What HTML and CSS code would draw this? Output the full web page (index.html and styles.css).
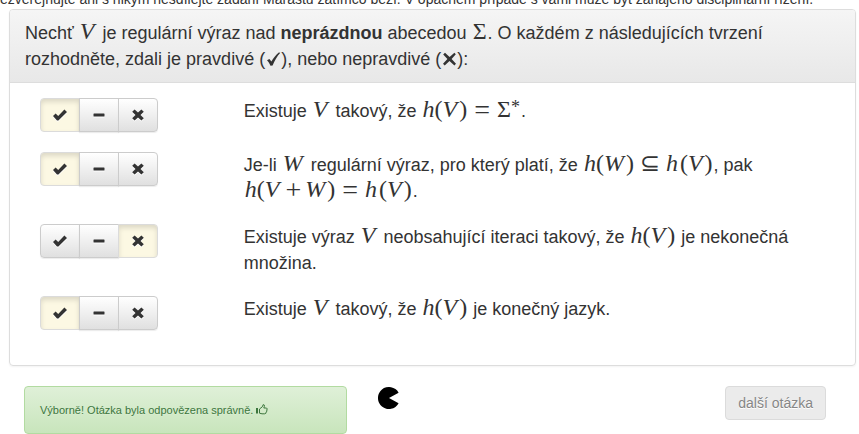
FILE: index.html
```html
<!DOCTYPE html>
<html lang="cs">
<head>
<meta charset="utf-8">
<meta name="viewport" content="width=device-width, initial-scale=1">
<title>Marast</title>
<link rel="stylesheet" href="styles.css">
</head>
<body>
<svg class="sprite" aria-hidden="true">
  <symbol id="ok" viewBox="0 0 14 12"><path d="M0 7 2.6 4.6 5.2 7 11.4 0.6 14 3 5.4 11.6H4z"/></symbol>
  <symbol id="minus" viewBox="0 0 14 12"><path d="M2 4.5h10a.5.5 0 0 1 .5.5v2a.5.5 0 0 1-.5.5H2a.5.5 0 0 1-.5-.5V5a.5.5 0 0 1 .5-.5z"/></symbol>
  <symbol id="remove" viewBox="0 0 14 12"><path d="M3.6.4 7 3.6 10.4.4 12.8 2.8 9.5 6l3.3 3.2-2.4 2.4L7 8.4l-3.4 3.2-2.4-2.4L4.5 6 1.2 2.8z"/></symbol>
</svg>
<p class="notice">ezveřejňujte ani s nikým nesdílejte zadání Marastu zatímco běží. V opačném případě s vámi může být zahájeno disciplinární řízení.</p>
<main>
  <section class="panel">
    <header class="panel-heading">Nechť <span class="math"><i>V</i></span> je regulární výraz nad <b>neprázdnou</b> abecedou <span class="math">Σ</span>. O každém z následujících tvrzení rozhodněte, zdali je pravdivé (<svg class="mark" viewBox="0 0 15 14" role="img" aria-label="ano"><path d="M1 8.2 3.4 7l2 2.6C7.400 6 9.700 2.800 12.800.4L14.300.8C11 4.400 8.600 8.800 6.600 13.400L4.500 13.800C3.600 11.600 2.500 9.800 1 8.200z"/></svg>), nebo nepravdivé (<svg class="mark" viewBox="0 0 15 14" role="img" aria-label="ne"><path d="M3 .8 7.600 5 12.400.8 13.800 2.200 9.600 7l4.400 4.800-1.600 1.600L7.500 9l-4.800 4.400L1 11.800 5.400 7 1.200 2.400z"/></svg>):</header>
    <div class="panel-body">
      <div class="question">
        <div class="choices" role="group" aria-label="Tvrzení 1">
          <button type="button" aria-label="Pravda" aria-pressed="true"><svg><use href="#ok"/></svg></button>
          <button type="button" aria-label="Nevím" aria-pressed="false"><svg><use href="#minus"/></svg></button>
          <button type="button" aria-label="Nepravda" aria-pressed="false"><svg><use href="#remove"/></svg></button>
        </div>
        <p>Existuje <span class="math"><i>V</i></span> takový, že <span class="math"><i>h</i>(<i>V</i>)<span class="rel">=</span>Σ<sup>*</sup></span>.</p>
      </div>
      <div class="question">
        <div class="choices" role="group" aria-label="Tvrzení 2">
          <button type="button" aria-label="Pravda" aria-pressed="true"><svg><use href="#ok"/></svg></button>
          <button type="button" aria-label="Nevím" aria-pressed="false"><svg><use href="#minus"/></svg></button>
          <button type="button" aria-label="Nepravda" aria-pressed="false"><svg><use href="#remove"/></svg></button>
        </div>
        <p>Je-li <span class="math"><i>W</i></span> regulární výraz, pro který platí, že <span class="math"><i>h</i>(<i>W</i>)<span class="subset">⊆</span><i>h</i>(<i>V</i>)</span>, pak <span class="math"><i>h</i>(<i>V</i><span class="op">+</span><i>W</i>)<span class="rel">=</span><i>h</i>(<i>V</i>)</span>.</p>
      </div>
      <div class="question">
        <div class="choices" role="group" aria-label="Tvrzení 3">
          <button type="button" aria-label="Pravda" aria-pressed="false"><svg><use href="#ok"/></svg></button>
          <button type="button" aria-label="Nevím" aria-pressed="false"><svg><use href="#minus"/></svg></button>
          <button type="button" aria-label="Nepravda" aria-pressed="true"><svg><use href="#remove"/></svg></button>
        </div>
        <p>Existuje výraz <span class="math"><i>V</i></span> neobsahující iteraci takový, že <span class="math"><i>h</i>(<i>V</i>)</span> je nekonečná množina.</p>
      </div>
      <div class="question">
        <div class="choices" role="group" aria-label="Tvrzení 4">
          <button type="button" aria-label="Pravda" aria-pressed="true"><svg><use href="#ok"/></svg></button>
          <button type="button" aria-label="Nevím" aria-pressed="false"><svg><use href="#minus"/></svg></button>
          <button type="button" aria-label="Nepravda" aria-pressed="false"><svg><use href="#remove"/></svg></button>
        </div>
        <p>Existuje <span class="math"><i>V</i></span> takový, že <span class="math"><i>h</i>(<i>V</i>)</span> je konečný jazyk.</p>
      </div>
    </div>
  </section>
  <footer class="actions">
    <div class="cell">
      <div class="alert" role="status">Výborně! Otázka byla odpovězena správně. <svg class="thumb" viewBox="0 0 12 11" aria-hidden="true"><path class="cuff" d="M0 4h2v5.500H0z"/><path d="M3.500 9.200V5L6.300 2.800 7.200.6Q8.800.4 8.300 2.600L7.800 4h2.700q1.300.8.300 2 .5 1.300-.6 2 0 1.800-1.500 1.800H6z"/></svg></div>
    </div>
    <div class="cell"><svg class="pacman" viewBox="0 0 22 22" role="img" aria-label="Načítání"><path d="M11 11 20.600 5.700A11 11 0 1 0 20.600 16.300z"/></svg></div>
    <div class="cell next"><button class="btn" type="button" disabled>další otázka</button></div>
  </footer>
</main>
</body>
</html>
```
FILE: styles.css
```css
* { box-sizing: border-box; }

body {
  margin: 0;
  background: #fff;
  color: #333;
  font: 14px/20px "Liberation Sans", Arial, sans-serif;
  overflow: hidden;
}

.sprite { display: none; }

p { margin: 0; }

.notice {
  display: flex;
  align-items: flex-end;
  height: 9px;
  overflow: hidden;
  white-space: nowrap;
}

main { margin: 0 3px 0 9px; }

.panel {
  border: 1px solid #ddd;
  border-radius: 4px;
  box-shadow: 0 1px 2px rgba(0, 0, 0, .05);
  font-size: 18px;
  line-height: 26px;
}

.panel-heading {
  padding: 10px 15px;
  border-bottom: 1px solid #ddd;
  border-radius: 3px 3px 0 0;
  background: linear-gradient(#f5f5f5, #e8e8e8);
}

.mark {
  width: 15px;
  height: 14px;
  margin-left: 1px;
  vertical-align: -1px;
  fill: #333;
}

.panel-body { padding: 15px; }

.question {
  display: grid;
  grid-template-columns: minmax(0, 1fr) minmax(0, 3fr);
  margin-bottom: 20px;
}

.question > * { margin: 0 15px; }

.math {
  margin: 0 1px;
  font-family: "Liberation Serif", "Times New Roman", serif;
  font-size: 24px;
  line-height: 20px;
  white-space: nowrap;
}

.math i { margin-right: 2px; }
.math i:first-child:not(:last-child) { margin-right: 0; }

.math .subset { margin: 0 6px; }

.math .rel,
.math .op {
  font-size: 28px;
  line-height: 0;
  vertical-align: -2px;
}

.math .rel { margin: 0 7px; }
.math .op { margin: 0 4px; }

.math sup {
  font-size: 18px;
  line-height: 0;
  vertical-align: 4px;
}

.choices {
  display: flex;
  align-self: start;
}

.choices button {
  display: flex;
  align-items: center;
  justify-content: center;
  width: 40px;
  height: 34px;
  padding: 0;
  border: 1px solid #ccc;
  background: linear-gradient(#fff, #e0e0e0);
  box-shadow: inset 0 1px 0 rgba(255, 255, 255, .15), 0 1px 1px rgba(0, 0, 0, .075);
}

.choices button + button { margin-left: -1px; }
.choices button:first-child { border-radius: 4px 0 0 4px; }
.choices button:last-child { border-radius: 0 4px 4px 0; }

.choices button[aria-pressed="true"] {
  border-color: #dbdbdb;
  background: #fcf8e3;
  box-shadow: inset 0 3px 5px rgba(0, 0, 0, .125);
}

.choices svg {
  width: 14px;
  height: 12px;
  fill: #333;
  filter: drop-shadow(0 1px 0 #fff);
}

.actions {
  display: grid;
  grid-template-columns: 5fr 1fr 6fr;
  padding-top: 20px;
}

.cell { padding: 0 15px; }

.next {
  padding-right: 30px;
  text-align: right;
}

.alert {
  padding: 13px 15px;
  border: 1px solid #b2dba1;
  border-radius: 4px;
  background: linear-gradient(#dff0d8, #c8e5bc);
  color: #3c763d;
  font-size: 11px;
  text-shadow: 0 1px 0 rgba(255, 255, 255, .2);
}

.thumb {
  width: 12px;
  height: 11px;
  vertical-align: -1px;
  fill: none;
  stroke: currentColor;
}

.thumb .cuff {
  fill: currentColor;
  stroke: none;
}

.pacman {
  display: block;
  width: 22px;
  height: 22px;
  margin: 1px;
}

.btn {
  padding: 6px 12px;
  border: 1px solid #dbdbdb;
  border-radius: 4px;
  background: #ebebeb;
  color: #868686;
  font: inherit;
  text-shadow: 0 1px 0 #fff;
}
```
